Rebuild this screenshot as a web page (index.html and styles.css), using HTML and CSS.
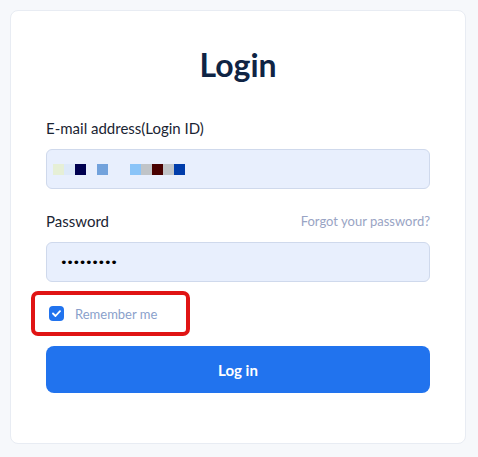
FILE: index.html
```html
<!DOCTYPE html>
<html lang="en">
<head>
    <meta charset="UTF-8">
    <meta name="viewport" content="width=device-width, initial-scale=1.0">
    <title>Login</title>
    <link rel="stylesheet" href="styles.css">
</head>
<body>
    <div class="card">
        <h1 class="title">Login</h1>
        <label class="label" for="email">E-mail address(Login ID)</label>
        <div class="field email-field" id="email">
            <span class="px" style="background:#e6efd6"></span>
            <span class="px" style="background:#dde9f9"></span>
            <span class="px" style="background:#000050"></span>
            <span class="px" style="background:transparent"></span>
            <span class="px" style="background:#72a2dc"></span>
            <span class="px" style="background:transparent"></span>
            <span class="px" style="background:transparent"></span>
            <span class="px" style="background:#8ac4f8"></span>
            <span class="px" style="background:#c0c4c8"></span>
            <span class="px" style="background:#480000"></span>
            <span class="px" style="background:#c0c4c8"></span>
            <span class="px" style="background:#003caa"></span>
        </div>
        <div class="label-row">
            <label class="label" for="password">Password</label>
            <a class="forgot" href="#">Forgot your password?</a>
        </div>
        <div class="field password-field" id="password">•••••••••</div>
        <div class="remember">
            <span class="check">
                <svg width="9" height="7" viewBox="0 0 9 7"><path d="M1 3.5 L3.5 6 L8 1.2" fill="none" stroke="#fff" stroke-width="1.8" stroke-linecap="round" stroke-linejoin="round"/></svg>
            </span>
            <span class="remember-text">Remember me</span>
        </div>
        <button class="login-btn">Log in</button>
    </div>
</body>
</html>
```

FILE: styles.css
```css
body {
    margin: 0;
    padding: 10px;
    background: #f6f8fb;
    font-family: Lato, "Noto Sans", sans-serif;
    color: #1a2433;
}
.card {
    width: 456px;
    height: 434px;
    box-sizing: border-box;
    background: #fff;
    border: 1px solid #e8ecf3;
    border-radius: 8px;
    padding: 34px 35px 0;
    display: flex;
    flex-direction: column;
}
.title {
    margin: 0 0 33px;
    font-size: 32px;
    line-height: 40px;
    font-weight: 700;
    text-align: center;
    color: #0f2444;
}
.label {
    display: block;
    font-size: 15px;
    line-height: 20px;
    color: #1a2433;
}
.label-row {
    display: flex;
    justify-content: space-between;
    align-items: center;
    margin-top: 22px;
}
.forgot {
    font-size: 13px;
    color: #99a4c4;
    text-decoration: none;
}
.field {
    box-sizing: border-box;
    height: 40px;
    margin-top: 11px;
    background: #e8effd;
    border: 1px solid #cfd9ec;
    border-radius: 6px;
    display: flex;
    align-items: center;
    padding: 0 6px;
}
.px {
    width: 11px;
    height: 11px;
}
.password-field {
    padding-left: 13px;
    font-size: 13px;
    letter-spacing: -1.4px;
    color: #000;
    font-family: "DejaVu Sans", sans-serif;
}
.remember {
    box-sizing: border-box;
    width: 159px;
    height: 45px;
    margin: 9px 0 0 -15px;
    border: 4px solid #e01414;
    border-radius: 7px;
    display: flex;
    align-items: center;
    padding-left: 14px;
    gap: 11px;
}
.check {
    width: 15px;
    height: 15px;
    border-radius: 4px;
    background: #2173ee;
    display: flex;
    align-items: center;
    justify-content: center;
}
.remember-text {
    font-size: 13px;
    color: #8a9fcb;
}
.login-btn {
    margin-top: 10px;
    height: 47px;
    border: none;
    border-radius: 8px;
    background: #2173ee;
    color: #fff;
    font-family: Lato, "Noto Sans", sans-serif;
    font-size: 15px;
    font-weight: 700;
    cursor: pointer;
}
```
